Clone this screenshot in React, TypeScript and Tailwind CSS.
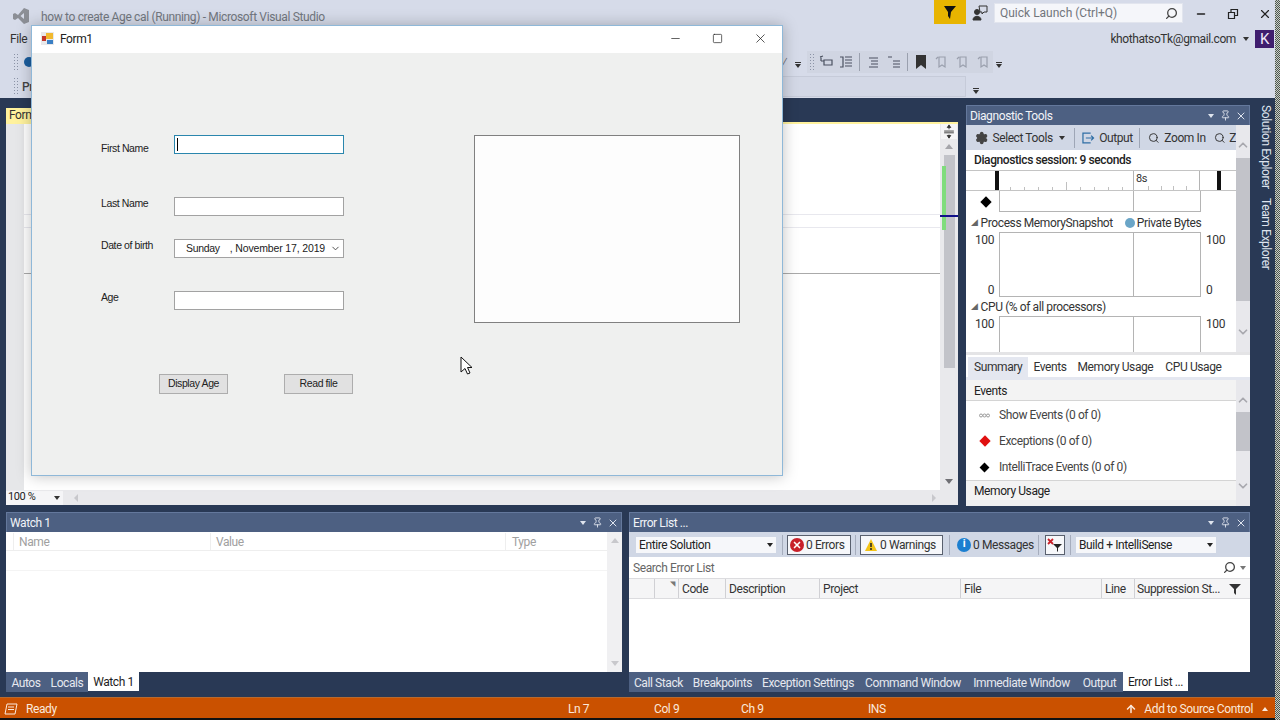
import { ChevronDown, Minus, Pin, Search, Settings, Square, X, ArrowUp } from "lucide-react";
import type { ReactNode } from "react";

const Caret = ({ color = "border-t-[#333]" }: { color?: string }) => (
  <span className={`inline-block w-0 h-0 border-x-[3px] border-x-transparent border-t-[4px] ${color}`} />
);

const Overflow = () => (
  <span className="flex flex-col items-center gap-[1px]">
    <span className="w-[6px] h-px bg-[#333]" />
    <Caret />
  </span>
);

const Grip = () => (
  <span className="block w-[5px] h-[18px] bg-[radial-gradient(#8b93a6_1px,transparent_1px)] bg-[length:3px_3px]" />
);

const PanelTitle = ({ title }: { title: string }) => (
  <div className="h-[20px] shrink-0 bg-[#4d6082] border-t border-x border-[#64789c] flex items-center pl-[3px] pr-[2px] text-[#f2f4f8] text-[12px]">
    <span className="flex-1 truncate">{title}</span>
    <span className="flex items-center text-[#dfe4ee]">
      <Caret color="border-t-[#dfe4ee]" />
      <Pin size={11} className="ml-[6px]" />
      <X size={12} className="ml-[4px]" />
    </span>
  </div>
);

const ToolIcon = ({ d }: { d: string }) => (
  <svg width="16" height="16" viewBox="0 0 16 16" fill="none" stroke="#4a5160" strokeWidth="1.2">
    <path d={d} />
  </svg>
);

const ScrollBar = ({ top, bottom, thumbTop, thumbH }: { top: string; bottom: string; thumbTop: number; thumbH: number }) => (
  <div className="w-[14px] shrink-0 bg-[#e8e8ec] flex flex-col items-center">
    <ChevronDown size={14} className={`rotate-180 text-[#a8a8ae] shrink-0 ${top}`} strokeWidth={3} />
    <div className="w-full flex-1 flex flex-col">
      <div style={{ height: thumbTop }} />
      <div style={{ height: thumbH }} className="bg-[#c2c3c9] w-full" />
      <div className="flex-1" />
    </div>
    <ChevronDown size={14} className={`text-[#a8a8ae] shrink-0 ${bottom}`} strokeWidth={3} />
  </div>
);

const TabStrip = ({ tabs, active }: { tabs: { label: string; w: string }[]; active: string }) => (
  <div className="h-[20px] flex text-[12px] whitespace-nowrap">
    {tabs.map((t) => (
      <div
        key={t.label}
        className={
          t.label === active
            ? `bg-white text-[#1e1e1e] h-[19px] flex items-center justify-center ${t.w}`
            : `bg-[#4d6082] text-[#e6e9f0] pt-[1px] flex items-center justify-center ${t.w}`
        }
      >
        {t.label}
      </div>
    ))}
  </div>
);

const Chrome = () => (
  <div className="h-[98px] shrink-0 bg-[#d6dbe9] text-[#444] text-[12px] flex flex-col">
    <div className="h-[28px] shrink-0 flex items-start">
      <svg width="18" height="18" viewBox="0 0 18 18" className="ml-[12px] mt-[7px]" fill="#8c8f96">
        <path d="M12 1l5 2v12l-5 2-6-6-3 2-2-1V7l2-1 3 2zM12 6L8.5 9 12 12z" />
      </svg>
      <span className="ml-[11px] mt-[8px] text-[#72777f] text-[12px] tracking-[-0.35px] whitespace-nowrap">
        how to create Age cal (Running) - Microsoft Visual Studio
      </span>
      <div className="flex-1" />
      <div className="w-[32px] h-[24px] bg-[#e8b400] flex items-center justify-center">
        <svg width="14" height="14" viewBox="0 0 14 14"><path d="M1 1h12L8 7l-1 7-2-3V7z" fill="#111" /></svg>
      </div>
      <svg width="16" height="16" viewBox="0 0 16 16" className="ml-[6px] mt-[5px]" fill="none" stroke="#333">
        <circle cx="5" cy="7" r="2.5" fill="#333" />
        <path d="M1 15c0-5 8-5 8 0z" fill="#333" />
        <path d="M7 1h8v6h-3l-2 2V7H8z" />
      </svg>
      <div className="ml-[6px] mt-[3px] w-[189px] h-[20px] bg-[#f5f6fa] border border-[#e2e5ee] flex items-center justify-between pl-[5px] pr-[4px] text-[#71757c] tracking-normal">
        <span>Quick Launch (Ctrl+Q)</span>
        <Search size={13} className="-scale-x-100 text-[#444]" strokeWidth={2.4} />
      </div>
      <div className="w-[97px] flex justify-between items-center pl-[12px] pr-[8px] h-[24px] mt-[2px] text-[#222]">
        <Minus size={12} strokeWidth={3} />
        <svg width="12" height="12" viewBox="0 0 12 12" fill="none" stroke="#222" strokeWidth="1.2"><path d="M1.5 4.5h6v6h-6zM4 4V1.5h6.500v6H8" /></svg>
        <X size={14} strokeWidth={2} />
      </div>
    </div>
    <div className="h-[22px] shrink-0 flex items-center">
      <span className="ml-[10px] text-[#333]">File</span>
      <div className="flex-1" />
      <span className="text-[#333]">khothatsoTk@gmail.com</span>
      <span className="ml-[7px] flex"><Caret /></span>
      <div className="ml-[6px] mr-[6px] w-[19px] h-[18px] bg-[#3f1d6e] text-[#f0e8fa] text-[15px] flex items-center justify-center">K</div>
    </div>
    <div className="h-[23px] shrink-0 flex items-center">
      <span className="ml-[13px]"><Grip /></span>
      <span className="ml-[6px] w-[10px] h-[10px] rounded-full bg-[#1b5e9e]" />
      <div className="flex-1" />
      <span className="text-[#666] mr-[8px]">⁄</span>
      <span className="mr-[6px] mt-[6px]"><Overflow /></span>
      <div className="h-[22px] flex items-center gap-[5px] bg-[#d0d5e2] pl-[2px] pr-[1px]">
        <Grip />
        <ToolIcon d="M2 2v5M2 7h3M5 6h8v5H5zM1 3l3-1" />
        <span className="-ml-[2px]"><ToolIcon d="M2 3h3v10H2M7 3h7M7 6h7M7 9h7M7 12h7" /></span>
        <span className="w-px h-[18px] bg-[#9aa0ae]" />
        <ToolIcon d="M4 4h9M6 7h7M6 10h7M4 13h9" />
        <ToolIcon d="M2 3h4M7 7h7M7 10h7M7 13h7" />
        <span className="w-px h-[18px] bg-[#9aa0ae]" />
        <svg width="16" height="16" viewBox="0 0 16 16"><path d="M3 1h10v14l-5-4-5 4z" fill="#333" /></svg>
        <span className="opacity-40 flex gap-[5px]">
          <ToolIcon d="M5 3v10l3-2 3 2V3zM2 5l2-2" />
          <ToolIcon d="M5 3v10l3-2 3 2V3zM2 5l2-2" />
          <ToolIcon d="M5 3v10l3-2 3 2V3zM2 5l2-2" />
        </span>
      </div>
      <span className="ml-[3px] mr-[278px] mt-[6px]"><Overflow /></span>
    </div>
    <div className="h-[25px] shrink-0 flex items-start pt-[3px]">
      <span className="ml-[13px] mt-[1px]"><Grip /></span>
      <span className="ml-[4px] mt-[2px] font-medium">Pr</span>
      <div className="flex-1" />
      <div className="w-[190px] h-[21px] border border-[#c6cbd9] bg-[#d3d8e6]" />
      <div className="w-[314px] h-[21px] pl-[7px] pt-[12px] flex items-start"><Overflow /></div>
    </div>
  </div>
);

const Editor = () => (
  <div className="h-[400px] flex flex-col ml-[5px] mr-[8px]">
    <div className="h-[17px] flex items-stretch">
      <div className="ml-[1px] mt-[3px] w-[44px] bg-[#fff29d] text-[#333] text-[12px] leading-[14px] pl-[3px] whitespace-nowrap">Form1</div>
      <div className="flex-1" />
      <div className="mr-[3px] pt-[6px]"><Caret color="border-t-[#e6e9f0]" /></div>
    </div>
    <div className="h-[2px] ml-[1px] bg-[#fff29d]" />
    <div className="flex-1 flex ml-[1px] bg-white min-h-0">
      <div className="w-[18px] bg-[#e6e7e9]" />
      <div className="flex-1 flex flex-col">
        <div className="h-[90px]" />
        <div className="h-[14px] border-y border-[#e8e8ee]" />
        <div className="h-[45px]" />
        <div className="h-px bg-[#aaaaaa]" />
      </div>
      <div className="relative w-[18px] bg-[#e9e9ec] flex flex-col items-center">
        <svg width="16" height="15" viewBox="0 0 15 17" className="bg-[#f5f5f7]" stroke="#333" fill="#333">
          <path d="M2 8h11M2 10h11M7.500 2v4M7.500 12v4" fill="none" />
          <path d="M5.500 4l2-3 2 3zM5.500 13l2 3 2-3z" />
        </svg>
        <div className="mt-[5px] w-0 h-0 border-x-[4px] border-x-transparent border-b-[5px] border-b-[#a5a5aa]" />
        <div className="mt-[6px] h-[213px] w-[11px] bg-[#c2c3c9] flex flex-col items-start">
          <div className="h-[11px]" />
          <div className="w-[4px] h-[64px] bg-[#7fdc7c] -ml-[2px]" />
        </div>
        <div className="flex-1" />
        <div className="mb-[6px] w-0 h-0 border-x-[4px] border-x-transparent border-t-[5px] border-t-[#707075]" />
        <div className="absolute left-0 right-0 top-[91px] h-[1.500px] bg-[#10108a]" />
      </div>
    </div>
    <div className="h-[15px] ml-[1px] bg-[#e9e9ec] flex items-center text-[11px] text-[#222]">
      <div className="w-[57px] h-[14px] bg-[#f5f5f7] flex items-center justify-between pl-[2px] pr-[3px]">
        100 % <Caret />
      </div>
      <div className="ml-[11px] w-0 h-0 border-y-[4px] border-y-transparent border-r-[4px] border-r-[#c8c8cc]" />
      <div className="flex-1" />
      <div className="mr-[22px] w-0 h-0 border-y-[4px] border-y-transparent border-l-[4px] border-l-[#c8c8cc]" />
    </div>
  </div>
);

const GraphRow = ({ left, right, h }: { left: ReactNode; right: ReactNode; h: string }) => (
  <div className={`flex ${h}`}>
    <div className="w-[33px] pt-[1px] flex flex-col justify-between items-end pr-[5px] text-[12px] leading-[14px]">{left}</div>
    <div className="w-[202px] border border-[#b4b4b4] flex">
      <div className="w-[134px] border-r border-[#b4b4b4]" />
    </div>
    <div className="pl-[5px] pt-[1px] flex flex-col justify-between text-[12px] leading-[14px]">{right}</div>
  </div>
);

const EventRow = ({ icon, label }: { icon: ReactNode; label: string }) => (
  <div className="h-[26px] flex items-center text-[#444]">
    <div className="w-[33px] flex justify-center pl-[4px]">{icon}</div>
    {label}
  </div>
);

const Diagnostics = () => (
  <div className="w-[284px] h-[401px] flex flex-col bg-white text-[12px] text-[#333]">
    <PanelTitle title="Diagnostic Tools" />
    <div className="flex flex-1 min-h-0 flex-col">
      <div className="h-[227px] flex overflow-hidden">
        <div className="flex-1 min-w-0 flex flex-col">
          <div className="h-[25px] shrink-0 bg-[#d0d7e5] flex items-center pl-[9px] whitespace-nowrap overflow-hidden">
            <Settings size={14} fill="#444" className="text-[#444]" />
            <span className="ml-[4px]">Select Tools</span>
            <span className="ml-[6px] flex"><Caret /></span>
            <span className="ml-[9px] w-px h-[20px] bg-[#9ea6b6]" />
            <svg width="14" height="14" viewBox="0 0 14 14" className="ml-[7px]" fill="none" stroke="#2f6fa5" strokeWidth="1.300">
              <path d="M9 2H1v10h8M4 7h8M9.500 4.500L12 7l-2.500 2.500" />
            </svg>
            <span className="ml-[4px]">Output</span>
            <span className="ml-[6px] w-px h-[20px] bg-[#9ea6b6]" />
            <Search size={12} className="ml-[8px]" />
            <span className="ml-[5px]">Zoom In</span>
            <Search size={12} className="ml-[8px]" />
            <span className="ml-[4px]">Z</span>
          </div>
          <div className="h-[20px] shrink-0 pl-[8px] flex items-center font-medium text-[#222]">Diagnostics session: 9 seconds</div>
          <div className="h-[21px] shrink-0 flex border-y border-[#c4c4c4]">
            <div className="w-[29px]" />
            <div className="w-[4px] bg-[#111]" />
            <div className="w-[135px] border-r border-[#b4b4b4] flex items-end justify-around px-[4px]">
              {[3, 3, 3, 3, 8, 3, 3, 3, 3].map((h, i) => (
                <span key={i} style={{ height: h }} className="w-px bg-[#c0c0c0]" />
              ))}
            </div>
            <div className="w-[66px] border-r border-[#b4b4b4] pl-[2px] text-[11px] leading-[15px] flex flex-col">
              8s
              <div className="flex justify-around px-[6px]">
                {[1, 2, 3, 4].map((i) => (
                  <span key={i} className="w-px h-[4px] bg-[#c0c0c0]" />
                ))}
              </div>
            </div>
            <div className="w-[17px]" />
            <div className="w-[4px] bg-[#111]" />
          </div>
          <div className="h-[21px] shrink-0 flex">
            <div className="w-[33px] flex items-center justify-center pl-[7px]">
              <span className="w-[8px] h-[8px] bg-black rotate-45" />
            </div>
            <div className="w-[202px] border-x border-b border-[#b4b4b4] flex">
              <div className="w-[134px] border-r border-[#b4b4b4]" />
            </div>
          </div>
          <div className="h-[18px] shrink-0 flex items-center pt-[4px] pl-[5px] whitespace-nowrap">
            <span className="text-[#666] text-[9px] mr-[3px]">◢</span>
            <span>Process MemorySnapshot</span>
            <span className="ml-[12px] w-[10px] h-[10px] rounded-full bg-[#6aa5c7]" />
            <span className="ml-[2px]">Private Bytes</span>
          </div>
          <div className="h-[2px] shrink-0" />
          <GraphRow h="h-[65px] shrink-0" left={<><span>100</span><span>0</span></>} right={<><span>100</span><span>0</span></>} />
          <div className="h-[18px] shrink-0 flex items-center pt-[2px] pl-[5px]">
            <span className="text-[#666] text-[9px] mr-[3px]">◢</span>
            CPU (% of all processors)
          </div>
          <div className="h-px shrink-0" />
          <GraphRow h="h-[40px] shrink-0" left={<span>100</span>} right={<span>100</span>} />
        </div>
        <ScrollBar top="mt-[13px]" bottom="mb-[13px]" thumbTop={6} thumbH={143} />
      </div>
      <div className="h-[3px] bg-[#e4e4e6]" />
      <div className="h-[25px] flex items-stretch pl-[2px] pt-[2px] border-b-[3px] border-[#e4e7f0]">
        <div className="px-[6px] bg-[#e4e7f0] flex items-center">Summary</div>
        <div className="px-[5px] flex items-center">Events</div>
        <div className="px-[6px] flex items-center">Memory Usage</div>
        <div className="px-[6px] flex items-center">CPU Usage</div>
      </div>
      <div className="flex-1 flex min-h-0">
        <div className="flex-1 flex flex-col">
          <div className="h-[21px] shrink-0 bg-[#f3f3f3] border-b border-[#d4d4d4] pl-[8px] pt-[1px] flex items-center text-[#222]">Events</div>
          <div className="h-px shrink-0" />
          <EventRow
            label="Show Events (0 of 0)"
            icon={
              <svg width="11" height="5" viewBox="0 0 11 5" fill="none" stroke="#999">
                <circle cx="2" cy="2.500" r="1.500" />
                <circle cx="5.500" cy="2.500" r="1.500" />
                <circle cx="9" cy="2.500" r="1.500" />
              </svg>
            }
          />
          <EventRow label="Exceptions (0 of 0)" icon={<span className="w-[8px] h-[8px] bg-[#e01010] rotate-45" />} />
          <EventRow label="IntelliTrace Events (0 of 0)" icon={<span className="w-[7px] h-[7px] bg-black rotate-45" />} />
          <div className="h-[20px] shrink-0 bg-[#f3f3f3] border-t border-[#d4d4d4] pl-[8px] pt-[1px] flex items-center text-[#222]">Memory Usage</div>
          <div className="flex-1 bg-[#eeeeef]" />
        </div>
        <ScrollBar top="mt-[13px]" bottom="mb-[13px]" thumbTop={5} thumbH={39} />
      </div>
    </div>
  </div>
);

const Watch = () => (
  <div className="w-[616px] flex flex-col">
    <div className="h-[160px] flex flex-col bg-white">
      <PanelTitle title="Watch 1" />
      <div className="flex-1 flex min-h-0">
        <div className="flex-1 flex flex-col">
          <div className="h-[19px] pt-[1px] border-b border-[#eeeeee] flex items-center text-[12px] text-[#a0a0a0]">
            <div className="w-[8px] h-full border-r border-[#eeeeee]" />
            <div className="w-[197px] pl-[5px] h-full border-r border-[#eeeeee] flex items-center">Name</div>
            <div className="w-[295px] pl-[5px] h-full border-r border-[#eeeeee] flex items-center">Value</div>
            <div className="pl-[6px]">Type</div>
          </div>
          <div className="h-[20px] border-b border-[#f4f4f4]" />
        </div>
        <div className="w-[15px] bg-[#f0f0f2] flex flex-col items-center justify-between py-[6px]">
          <div className="w-0 h-0 border-x-[4px] border-x-transparent border-b-[5px] border-b-[#c8c8cc]" />
          <div className="w-0 h-0 border-x-[4px] border-x-transparent border-t-[5px] border-t-[#c8c8cc]" />
        </div>
      </div>
    </div>
    <TabStrip
      tabs={[
        { label: "Autos", w: "w-[40px]" },
        { label: "Locals", w: "w-[42px]" },
        { label: "Watch 1", w: "w-[51px]" },
      ]}
      active="Watch 1"
    />
  </div>
);

const ErrButton = ({ icon, label, w, boxed }: { icon: ReactNode; label: string; w: string; boxed?: boolean }) => (
  <div className={`h-[20px] shrink-0 flex items-center gap-[2px] px-[2px] ${w} ${boxed ? "bg-[#f6f7fa] border border-[#59606e]" : ""}`}>
    {icon}
    {label}
  </div>
);

const Sep = () => <span className="block w-px h-[20px] bg-[#a6adbd]" />;

const ErrorList = () => (
  <div className="w-[621px] ml-[7px] flex flex-col">
    <div className="h-[160px] flex flex-col bg-white text-[12px] text-[#333]">
      <PanelTitle title="Error List ..." />
      <div className="h-[25px] shrink-0 bg-[#d0d7e5] flex items-center pl-[7px] whitespace-nowrap">
        <div className="w-[140px] h-[16px] bg-[#f6f7fa] flex items-center justify-between px-[3px] text-[#222]">
          Entire Solution <Caret color="border-t-[#222]" />
        </div>
        <span className="ml-[6px] mr-[4px]"><Sep /></span>
        <ErrButton
          boxed
          w="w-[64px]"
          label="0 Errors"
          icon={<span className="w-[14px] h-[14px] shrink-0 rounded-full bg-[#c8202a] text-white flex items-center justify-center"><X size={10} strokeWidth={4} /></span>}
        />
        <span className="mx-[4px]"><Sep /></span>
        <ErrButton
          boxed
          w="w-[83px]"
          label="0 Warnings"
          icon={<svg width="14" height="14" viewBox="0 0 14 14" className="ml-[1px] shrink-0"><path d="M7 1l6 12H1z" fill="#f3c316" /><path d="M7 5v4M7 10v2" stroke="#222" strokeWidth="1.500" /></svg>}
        />
        <span className="ml-[6px] mr-[5px]"><Sep /></span>
        <ErrButton
          w="w-[75px]"
          label="0 Messages"
          icon={<span className="w-[14px] h-[14px] shrink-0 rounded-full bg-[#1c7fd0] text-white text-[11px] font-bold flex items-center justify-center">i</span>}
        />
        <span className="ml-[8px] mr-[6px]"><Sep /></span>
        <div className="w-[20px] h-[20px] bg-[#f6f7fa] border border-[#59606e] flex items-center justify-center">
          <svg width="16" height="14" viewBox="0 0 16 14">
            <path d="M1 1l5 5M6 1L1 6" stroke="#c8202a" strokeWidth="1.800" />
            <path d="M6 6h9l-4 4v4l-1-1v-3z" fill="#222" />
          </svg>
        </div>
        <span className="mx-[5px]"><Sep /></span>
        <div className="w-[140px] h-[16px] bg-[#f6f7fa] flex items-center justify-between px-[3px] text-[#222]">
          Build + IntelliSense <Caret color="border-t-[#222]" />
        </div>
      </div>
      <div className="h-[21px] shrink-0 flex items-center justify-between px-[4px] text-[#666]">
        Search Error List
        <span className="flex items-center gap-[4px]">
          <Search size={13} className="-scale-x-100 text-[#444]" strokeWidth={2.4} />
          <Caret color="border-t-[#777]" />
        </span>
      </div>
      <div className="h-[21px] shrink-0 bg-[#f5f5f6] border-y border-[#dcdcdf] flex text-[#333]">
        <div className="w-[26px] border-r border-[#d0d0d4]" />
        <div className="w-[24px] border-r border-[#d0d0d4] text-[7px] text-[#777] text-right pr-[3px]">◥</div>
        <div className="w-[47px] pl-[3px] border-r border-[#d0d0d4] flex items-center">Code</div>
        <div className="w-[94px] pl-[3px] border-r border-[#d0d0d4] flex items-center">Description</div>
        <div className="w-[141px] pl-[3px] border-r border-[#d0d0d4] flex items-center">Project</div>
        <div className="w-[141px] pl-[3px] border-r border-[#d0d0d4] flex items-center">File</div>
        <div className="w-[33px] pl-[3px] border-r border-[#d0d0d4] flex items-center">Line</div>
        <div className="flex-1 pl-[2px] flex items-center justify-between pr-[9px]">
          Suppression St...
          <svg width="12" height="12" viewBox="0 0 12 12"><path d="M0 1h12L7 6v6L5 10V6z" fill="#333" /></svg>
        </div>
      </div>
    </div>
    <TabStrip
      tabs={[
        { label: "Call Stack", w: "w-[59px]" },
        { label: "Breakpoints", w: "w-[69px]" },
        { label: "Exception Settings", w: "w-[102px]" },
        { label: "Command Window", w: "w-[108px]" },
        { label: "Immediate Window", w: "w-[109px]" },
        { label: "Output", w: "w-[47px]" },
        { label: "Error List ...", w: "w-[65px]" },
      ]}
      active="Error List ..."
    />
  </div>
);

const Field = ({ label, mt, children }: { label: string; mt: string; children?: ReactNode }) => (
  <div className={`flex items-start ${mt}`}>
    <div className="w-[73px] -mt-[1px]">{label}</div>
    <div className="w-[170px] h-[19px] bg-white border border-[#a2a2a2] flex items-center whitespace-nowrap">{children}</div>
  </div>
);

const FormWindow = () => (
  <div className="absolute left-[31px] top-[25px] w-[752px] h-[451px] bg-[#eff0ef] border border-[#8fb8d8] shadow-[0_0_14px_rgba(0,0,0,0.25)] flex flex-col font-['Liberation_Sans',sans-serif] text-[10.5px] tracking-[-0.4px] text-[#222]">
    <div className="h-[27px] pb-[2px] bg-white flex items-center pl-[9px] font-['Roboto',sans-serif] text-[12px] text-[#222]">
      <svg width="13" height="13" viewBox="0 0 13 13">
        <rect width="13" height="13" fill="#e8e8ea" />
        <rect x="1" y="4" width="4" height="5" fill="#c2362a" />
        <rect x="5" y="1" width="7" height="6" fill="#f1b92f" />
        <rect x="6" y="8" width="6" height="4" fill="#3a7fc4" />
      </svg>
      <span className="ml-[6px] flex-1">Form1</span>
      <div className="flex items-center text-[#222] mr-[14px]">
        <Minus size={13} strokeWidth={1.300} />
        <Square size={11} strokeWidth={1.500} className="ml-[30px]" />
        <X size={15} strokeWidth={1.200} className="ml-[30px]" />
      </div>
    </div>
    <div className="flex-1 flex items-start pl-[69px] pt-[82px]">
      <div className="w-[373px] flex flex-col">
        <div className="flex items-start">
          <div className="w-[73px] pt-[6px]">First Name</div>
          <div className="w-[170px] h-[19px] bg-white border border-[#2a86ad] flex items-center pl-[2px]">
            <span className="w-px h-[13px] bg-black" />
          </div>
        </div>
        <Field label="Last Name" mt="mt-[40px]" />
        <Field label="Date of birth" mt="mt-[23px]">
          <span className="ml-[11px] pt-[1px] tracking-[-0.3px]">Sunday</span>
          <span className="ml-[10px] pt-[1px] tracking-[-0.15px]">, November 17, 2019</span>
          <ChevronDown size={11} className="ml-[5px] text-[#444]" />
        </Field>
        <Field label="Age" mt="mt-[33px]" />
        <div className="flex mt-[64px] pl-[58px] gap-[56px] text-center">
          <div className="w-[69px] h-[20px] pt-[1px] bg-[#e1e1e1] border border-[#adadad] flex items-center justify-center">Display Age</div>
          <div className="w-[69px] h-[20px] pt-[1px] bg-[#e1e1e1] border border-[#adadad] flex items-center justify-center">Read file</div>
        </div>
      </div>
      <div className="w-[266px] h-[188px] bg-[#fdfdfd] border border-[#808080]" />
    </div>
    <svg width="14" height="20" viewBox="0 0 14 20" className="absolute left-[428px] top-[330px]">
      <path d="M1 1v15l4-3.500 2.500 5.500 2.500-1-2.500-5.500H12z" fill="#fff" stroke="#111" />
    </svg>
  </div>
);

const StatusBar = () => (
  <div className="h-[21px] shrink-0 pt-[1px] bg-[#ca5100] text-[#fbe9dc] text-[12px] flex items-center border-t border-[#b86a2e]">
    <svg width="14" height="12" viewBox="0 0 14 12" className="ml-[4px]" fill="none" stroke="#fbe9dc">
      <path d="M3 1h10l-2 10H1zM4 4h6M4 6.500h6" />
    </svg>
    <span className="ml-[8px] w-[542px]">Ready</span>
    <span className="w-[86px]">Ln 7</span>
    <span className="w-[87px]">Col 9</span>
    <span className="w-[127px]">Ch 9</span>
    <span className="flex-1">INS</span>
    <ArrowUp size={12} strokeWidth={3} />
    <span className="ml-[7px]">Add to Source Control</span>
    <span className="ml-[9px] mr-[12px] w-0 h-0 border-x-[3px] border-x-transparent border-b-[4px] border-b-[#fbe9dc]" />
  </div>
);

export default function App() {
  return (
    <div className="relative w-[1280px] h-[720px] overflow-hidden bg-[#293955] flex flex-col font-['Roboto',sans-serif] tracking-[-0.4px]">
      <Chrome />
      <div className="flex-1 flex flex-col min-h-0">
        <div className="h-[414px] pt-[7px] flex">
          <div className="w-[966px]"><Editor /></div>
          <Diagnostics />
          <div className="w-[25px] h-[200px] flex pl-[6px] text-[#dfe4ee] text-[12px] [writing-mode:vertical-rl] gap-[9px] whitespace-nowrap">
            <span>Solution Explorer</span>
            <span>Team Explorer</span>
          </div>
        </div>
        <div className="flex ml-[6px]">
          <Watch />
          <ErrorList />
        </div>
      </div>
      <StatusBar />
      <div className="h-[2px] shrink-0 bg-[#111]" />
      <FormWindow />
      <div className="absolute right-0 top-0 bottom-0 w-[5px] bg-[repeating-conic-gradient(#4d544d_0_25%,#c9cfc9_0_50%)] bg-[length:2px_2px]" />
    </div>
  );
}
